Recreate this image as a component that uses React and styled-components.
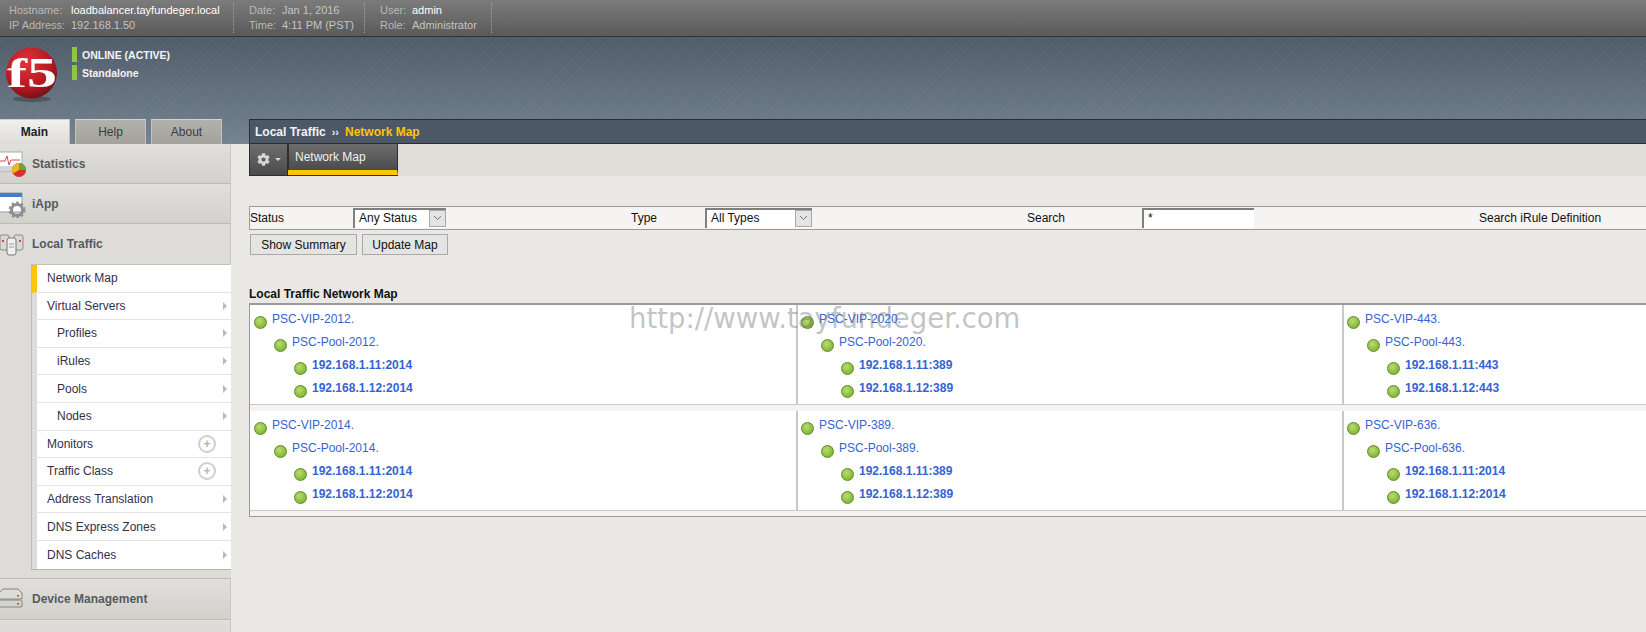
import styled, { createGlobalStyle } from 'styled-components';
import { FaCog } from 'react-icons/fa';

const GlobalStyle = createGlobalStyle`
    html, body { margin: 0; padding: 0; height: 100%; overflow: hidden; background: #e9e8e4; }
    body { font-family: "Liberation Sans", Arial, sans-serif; font-size: 12px; color: #222; }
    * { box-sizing: border-box; }
`;

/***** HEADER */
const Page = styled.div`
    width: 100%;
    height: 632px;
    overflow: hidden;
    display: flex;
    flex-direction: column;
`;

const TopBar = styled.div`
    height: 37px;
    flex: none;
    display: flex;
    background: linear-gradient(#7b7b7b, #5a5a5a);
    border-bottom: 1px solid #333;
    font-size: 11px;
    line-height: 14px;
    color: #b9b9b9;
    padding-top: 3px;
`;

const InfoGroup = styled.div`
    width: ${props => props.$width}px;
    height: 30px;
    padding-left: ${props => props.$pad}px;
    border-right: 1px dotted #a0a0a0;
    display: grid;
    grid-template-columns: ${props => props.$label}px 1fr;
    white-space: nowrap;
`;

const InfoValue = styled.span`
    color: ${props => props.$bright ? '#fff' : '#c4c4c4'};
`;

const Banner = styled.div`
    height: 107px;
    flex: none;
    display: flex;
    flex-direction: column;
    background:
        repeating-linear-gradient(135deg, rgba(255,255,255,.03) 0 1px, transparent 1px 4px),
        linear-gradient(#515c6b, #74838f);
`;

const BrandRow = styled.div`
    height: 82px;
    flex: none;
    display: flex;
    padding: 10px 0 0 6px;
`;

const StatusList = styled.div`
    margin-left: 12px;
    display: flex;
    flex-direction: column;
    gap: 3px;
`;

const StatusLine = styled.div`
    height: 15px;
    display: flex;
    align-items: center;
    gap: 5px;
    font-size: 10.5px;
    font-weight: bold;
    color: #f4f4f4;
    &::before {
        content: '';
        width: 5px;
        height: 15px;
        background: #8fc63f;
    }
`;

const NavRow = styled.div`
    height: 25px;
    flex: none;
    display: flex;
`;

const Tabs = styled.div`
    width: 249px;
    flex: none;
    display: flex;
    gap: 5px;
`;

const Tab = styled.div`
    width: ${props => props.$width}px;
    display: flex;
    align-items: center;
    justify-content: center;
    font-size: 12px;
    font-weight: ${props => props.$active ? 'bold' : 'normal'};
    color: ${props => props.$active ? '#222' : '#3c3c3c'};
    background: ${props => props.$active ? 'linear-gradient(#f1f0ed, #dddcd8)' : 'linear-gradient(#b2b1ac, #a3a29d)'};
    border-top: 1px solid #d2d1cc;
    border-left: ${props => props.$active ? 'none' : '1px solid #c4c3be'};
    border-right: 1px solid #c4c3be;
`;

const Breadcrumb = styled.div`
    flex: 1;
    display: flex;
    align-items: center;
    padding-left: 5px;
    background: #4c5867;
    border-top: 1px solid #2e2e2e;
    border-left: 1px solid #2e2e2e;
    border-bottom: 1px solid #2e2e2e;
    font-size: 12px;
    font-weight: bold;
    color: #f2f2f2;
`;

const CrumbSep = styled.span`
    margin: 0 6px;
    font-size: 11px;
`;

const CrumbCurrent = styled.span`
    color: #ffc600;
`;

/***** SIDEBAR */
const Body = styled.div`
    flex: 1;
    display: flex;
    min-height: 0;
`;

const Sidebar = styled.div`
    width: 231px;
    flex: none;
    background: #dddcd8;
`;

const SectionHead = styled.div`
    height: ${props => props.$height}px;
    display: flex;
    align-items: center;
    gap: 6px;
    font-size: 12px;
    font-weight: bold;
    color: #555a60;
    background: ${props => props.$open ? '#dedcd8' : 'linear-gradient(#e0dfdb, #d2d1cc)'};
    border-right: 1px solid #c9c8c3;
    border-bottom: ${props => props.$open ? 'none' : '1px solid #bdbcb7'};
    box-shadow: ${props => props.$open ? 'none' : 'inset 0 -1px 0 #d2d1cc'};
`;

const SectionIcon = styled.svg`
    width: 26px;
    height: 28px;
    flex: none;
`;

const SubMenu = styled.div`
    margin-left: 31px;
    border-top: 1px solid #c2c1bc;
    border-left: 1px solid #bdbcb7;
    border-bottom: 1px solid #b5b4af;
    background: #fff;
`;

const SubRow = styled.div`
    height: 27.6px;
    display: flex;
    align-items: center;
    justify-content: space-between;
    padding: 0 4px 0 ${props => props.$nested ? 20 : 10}px;
    border-left: 5px solid ${props => props.$active ? '#ffc600' : '#dcdcdc'};
    border-bottom: ${props => props.$last ? 'none' : '1px solid #e4e4e4'};
    font-size: 12px;
    color: #33304a;
`;

const Arrow = styled.span`
    width: 0;
    height: 0;
    border-left: 4px solid #b9b9b9;
    border-top: 4px solid transparent;
    border-bottom: 4px solid transparent;
`;

const PlusCircle = styled.span`
    width: 18px;
    height: 18px;
    margin-right: 11px;
    border-radius: 50%;
    border: 2px solid #cfcfcf;
    display: flex;
    align-items: center;
    justify-content: center;
    color: #b4b4b4;
    font-size: 12px;
    font-weight: bold;
    line-height: 1;
`;

const MenuGap = styled.div`
    height: 9px;
    border-bottom: 1px solid #bdbcb7;
`;

/***** MAIN */
const Main = styled.div`
    flex: 1;
    min-width: 0;
    padding-left: 18px;
    background: #e9e8e4;
`;

const SubNav = styled.div`
    height: 32px;
    display: flex;
    background: #dfded9;
    margin-top: 0;
`;

const GearButton = styled.div`
    width: 39px;
    display: flex;
    align-items: center;
    justify-content: center;
    gap: 5px;
    color: #d6d6d6;
    background: linear-gradient(#6d6d6d, #4b4b4b);
    border: 1px solid #2e2e2e;
    border-top: none;
`;

const Caret = styled.span`
    border-top: 3px solid #d6d6d6;
    border-left: 3px solid transparent;
    border-right: 3px solid transparent;
`;

const SubNavTab = styled.div`
    width: 110px;
    padding: 6px 0 0 7px;
    font-size: 12px;
    color: #f0f0f0;
    background: linear-gradient(#6d6d6d, #4b4b4b);
    border-right: 1px solid #2e2e2e;
    border-bottom: 5px solid #ffc600;
    box-shadow: inset 1px 0 0 #2e2e2e, 0 1px 0 #2e2e2e;
    height: 31px;
`;

const FilterBar = styled.div`
    margin-top: 30px;
    height: 24px;
    display: grid;
    grid-template-columns: 103px 278px 74px 322px 115px 337px 1fr;
    align-items: center;
    background: #f5f4f2;
    border: 1px solid #9a9a9a;
    border-right: none;
    font-size: 12px;
    color: #111;
`;

const FilterLabel = styled.span`
    white-space: nowrap;
`;

const SelectBox = styled.div`
    width: ${props => props.$width}px;
    height: 20px;
    margin-top: -1px;
    padding: 0 0 1px 4px;
    display: flex;
    align-items: center;
    justify-content: space-between;
    background: #fff;
    border-top: 2px solid #7f7f7f;
    border-left: 2px solid #7f7f7f;
    font-size: 12px;
`;

const SelectArrow = styled.span`
    width: 17px;
    height: 17px;
    display: flex;
    align-items: center;
    justify-content: center;
    background: #e4e4e4;
    border: 1px solid #a8a8a8;
`;

const SearchBox = styled(SelectBox)`
    justify-content: flex-start;
`;

const ButtonRow = styled.div`
    margin-top: 4px;
    padding-left: 1px;
    display: flex;
    gap: 5px;
`;

const Button = styled.div`
    width: ${props => props.$width}px;
    height: 21px;
    display: flex;
    align-items: center;
    justify-content: center;
    font-size: 12px;
    color: #111;
    background: #e4e4e2;
    border: 1px solid #a9a9a9;
`;

const MapTitle = styled.div`
    margin-top: 32px;
    height: 16px;
    font-size: 12px;
    line-height: 15px;
    font-weight: bold;
    color: #111;
`;

const MapTable = styled.div`
    position: relative;
    display: grid;
    grid-template-columns: 548px 546px 1fr;
    row-gap: 6px;
    background: #f5f4f2;
    border: 1px solid #9a9a9a;
    border-right: none;
    border-top-width: 2px;
    padding-bottom: 5px;
`;

const MapCell = styled.div`
    height: 100px;
    padding: 4px 0 0 ${props => props.$first ? 4 : 3}px;
    background: #fff;
    border-right: 2px solid #c8c8c8;
    border-bottom: 1px solid #c8c8c8;
    &:nth-child(3n) { border-right: none; }
`;

const NodeRow = styled.div`
    height: 23px;
    display: flex;
    gap: 5px;
    padding-left: ${props => props.$level * 20}px;
    font-size: 12px;
    line-height: 20px;
    font-weight: ${props => props.$level === 2 ? 'bold' : 'normal'};
    color: #3563d3;
    white-space: nowrap;
`;

const Dot = styled.span`
    width: 13px;
    height: 13px;
    margin-top: 7px;
    flex: none;
    border-radius: 50%;
    border: 1px solid #5c8a22;
    background: radial-gradient(circle at 40% 35%, #b9dc6f, #86b83a 70%);
`;

const Watermark = styled.div`
    position: absolute;
    left: 379px;
    top: -3px;
    font-family: "DejaVu Sans", sans-serif;
    font-size: 27.5px;
    line-height: 32px;
    color: rgba(110, 110, 110, .42);
    white-space: nowrap;
    pointer-events: none;
`;

const Logo = () => (
    <svg width="54" height="58" viewBox="0 0 54 58" style={{ flex: 'none' }}>
        <defs>
            <radialGradient id="ball" cx="40%" cy="30%" r="75%">
                <stop offset="0" stopColor="#e0353c" />
                <stop offset=".65" stopColor="#b5171f" />
                <stop offset="1" stopColor="#6d1015" />
            </radialGradient>
        </defs>
        <ellipse cx="26" cy="52" rx="19" ry="3" fill="#333" opacity=".45" />
        <circle cx="25.5" cy="26" r="25.5" fill="url(#ball)" />
        <text x="1" y="40" fontFamily="Liberation Serif, serif" fontWeight="bold" fontSize="43" fill="#fff" textLength="50" lengthAdjust="spacingAndGlyphs">f5</text>
    </svg>
);

const StatsIcon = () => (
    <SectionIcon viewBox="0 0 26 28">
        <rect x="-2" y="2" width="24" height="19" fill="#fff" stroke="#aaa" />
        <path d="M0 11h5l2-5 2 9 2-5h9" fill="none" stroke="#c9504f" />
        <rect x="-2" y="16" width="20" height="4" fill="#cfd6de" />
        <circle cx="19" cy="20" r="7" fill="#d4322c" />
        <path d="M19 20V13a7 7 0 0 1 7 7z" fill="#6aa834" />
        <path d="M19 20l-6 3.5A7 7 0 0 1 19 13z" fill="#e9b824" />
    </SectionIcon>
);

const AppIcon = () => (
    <SectionIcon viewBox="0 0 26 28">
        <rect x="-1" y="3" width="23" height="19" fill="#fff" stroke="#999" />
        <rect x="-1" y="3" width="23" height="4" fill="#3f7fcb" />
        <circle cx="17" cy="20" r="5.5" fill="none" stroke="#8b8f92" strokeWidth="3" />
        <circle cx="17" cy="20" r="7.5" fill="none" stroke="#8b8f92" strokeWidth="2" strokeDasharray="2.5 2.4" />
    </SectionIcon>
);

const TrafficIcon = () => (
    <SectionIcon viewBox="0 0 26 28">
        <rect x="0" y="5" width="9" height="15" rx="2" fill="#d9d9d6" stroke="#8a8a88" />
        <rect x="14" y="5" width="9" height="15" rx="2" fill="#d9d9d6" stroke="#8a8a88" />
        <rect x="7" y="8" width="9" height="17" rx="2" fill="#f0f0ee" stroke="#77777a" />
        <path d="M9 14h5M9 17h5" stroke="#999" />
        <rect x="2" y="10" width="2" height="2" fill="#d0443c" />
        <rect x="19" y="10" width="2" height="2" fill="#d0443c" />
    </SectionIcon>
);

const DeviceIcon = () => (
    <SectionIcon viewBox="0 0 26 28">
        <path d="M-1 8l4-4h15l4 4v6h-23z" fill="#dcdcd9" stroke="#85857f" />
        <rect x="-1" y="15" width="23" height="7" rx="1" fill="#d2d2ce" stroke="#85857f" />
        <rect x="17" y="10" width="2" height="1.5" fill="#d0443c" />
        <rect x="17" y="18" width="2" height="1.5" fill="#d0443c" />
    </SectionIcon>
);

const NextIcon = () => (
    <SectionIcon viewBox="0 0 26 28">
        <rect x="6" y="11" width="11" height="14" fill="#e6e6e4" stroke="#77777a" />
    </SectionIcon>
);

const menuItems = [
    { label: 'Network Map', active: true },
    { label: 'Virtual Servers', arrow: true },
    { label: 'Profiles', arrow: true, nested: true },
    { label: 'iRules', arrow: true, nested: true },
    { label: 'Pools', arrow: true, nested: true },
    { label: 'Nodes', arrow: true, nested: true },
    { label: 'Monitors', plus: true },
    { label: 'Traffic Class', plus: true },
    { label: 'Address Translation', arrow: true },
    { label: 'DNS Express Zones', arrow: true },
    { label: 'DNS Caches', arrow: true },
];

const maps = [
    { vip: 'PSC-VIP-2012.', pool: 'PSC-Pool-2012.', port: 2014 },
    { vip: 'PSC-VIP-2020.', pool: 'PSC-Pool-2020.', port: 389 },
    { vip: 'PSC-VIP-443.', pool: 'PSC-Pool-443.', port: 443 },
    { vip: 'PSC-VIP-2014.', pool: 'PSC-Pool-2014.', port: 2014 },
    { vip: 'PSC-VIP-389.', pool: 'PSC-Pool-389.', port: 389 },
    { vip: 'PSC-VIP-636.', pool: 'PSC-Pool-636.', port: 2014 },
];

const Chevron = () => (
    <svg width="9" height="6" viewBox="0 0 9 6">
        <path d="M1 1l3.5 3.5L8 1" fill="none" stroke="#777" />
    </svg>
);

const App = () => (
    <Page>
        <GlobalStyle />
        <TopBar>
            <InfoGroup $width={234} $pad={9} $label={62}>
                <span>Hostname:</span><InfoValue $bright>loadbalancer.tayfundeger.local</InfoValue>
                <span>IP Address:</span><InfoValue>192.168.1.50</InfoValue>
            </InfoGroup>
            <InfoGroup $width={131} $pad={15} $label={33}>
                <span>Date:</span><InfoValue>Jan 1, 2016</InfoValue>
                <span>Time:</span><InfoValue>4:11 PM (PST)</InfoValue>
            </InfoGroup>
            <InfoGroup $width={127} $pad={15} $label={32}>
                <span>User:</span><InfoValue $bright>admin</InfoValue>
                <span>Role:</span><InfoValue>Administrator</InfoValue>
            </InfoGroup>
        </TopBar>

        <Banner>
            <BrandRow>
                <Logo />
                <StatusList>
                    <StatusLine>ONLINE (ACTIVE)</StatusLine>
                    <StatusLine>Standalone</StatusLine>
                </StatusList>
            </BrandRow>
            <NavRow>
                <Tabs>
                    <Tab $active $width={70}>Main</Tab>
                    <Tab $width={71}>Help</Tab>
                    <Tab $width={71}>About</Tab>
                </Tabs>
                <Breadcrumb>
                    Local Traffic<CrumbSep>››</CrumbSep><CrumbCurrent>Network Map</CrumbCurrent>
                </Breadcrumb>
            </NavRow>
        </Banner>

        <Body>
            <Sidebar>
                <SectionHead $height={40}><StatsIcon />Statistics</SectionHead>
                <SectionHead $height={40}><AppIcon />iApp</SectionHead>
                <SectionHead $height={40} $open><TrafficIcon />Local Traffic</SectionHead>
                <SubMenu>
                    {menuItems.map((item, index) => (
                        <SubRow key={item.label} $active={item.active} $nested={item.nested} $last={index === menuItems.length - 1}>
                            {item.label}
                            {item.arrow ? <Arrow /> : null}
                            {item.plus ? <PlusCircle>+</PlusCircle> : null}
                        </SubRow>
                    ))}
                </SubMenu>
                <MenuGap />
                <SectionHead $height={41}><DeviceIcon />Device Management</SectionHead>
                <SectionHead $height={40}><NextIcon /></SectionHead>
            </Sidebar>

            <Main>
                <SubNav>
                    <GearButton><FaCog size={13} /><Caret /></GearButton>
                    <SubNavTab>Network Map</SubNavTab>
                </SubNav>

                <FilterBar>
                    <FilterLabel>Status</FilterLabel>
                    <SelectBox $width={93}>Any Status<SelectArrow><Chevron /></SelectArrow></SelectBox>
                    <FilterLabel>Type</FilterLabel>
                    <SelectBox $width={107}>All Types<SelectArrow><Chevron /></SelectArrow></SelectBox>
                    <FilterLabel>Search</FilterLabel>
                    <SearchBox $width={112}>*</SearchBox>
                    <FilterLabel>Search iRule Definition</FilterLabel>
                </FilterBar>

                <ButtonRow>
                    <Button $width={107}>Show Summary</Button>
                    <Button $width={86}>Update Map</Button>
                </ButtonRow>

                <MapTitle>Local Traffic Network Map</MapTitle>

                <MapTable>
                    {maps.map((map, index) => (
                        <MapCell key={map.vip} $first={index % 3 === 0}>
                            <NodeRow $level={0}><Dot />{map.vip}</NodeRow>
                            <NodeRow $level={1}><Dot />{map.pool}</NodeRow>
                            <NodeRow $level={2}><Dot />192.168.1.11:{map.port}</NodeRow>
                            <NodeRow $level={2}><Dot />192.168.1.12:{map.port}</NodeRow>
                        </MapCell>
                    ))}
                    <Watermark>http://www.tayfundeger.com</Watermark>
                </MapTable>
            </Main>
        </Body>
    </Page>
);

export default App;
